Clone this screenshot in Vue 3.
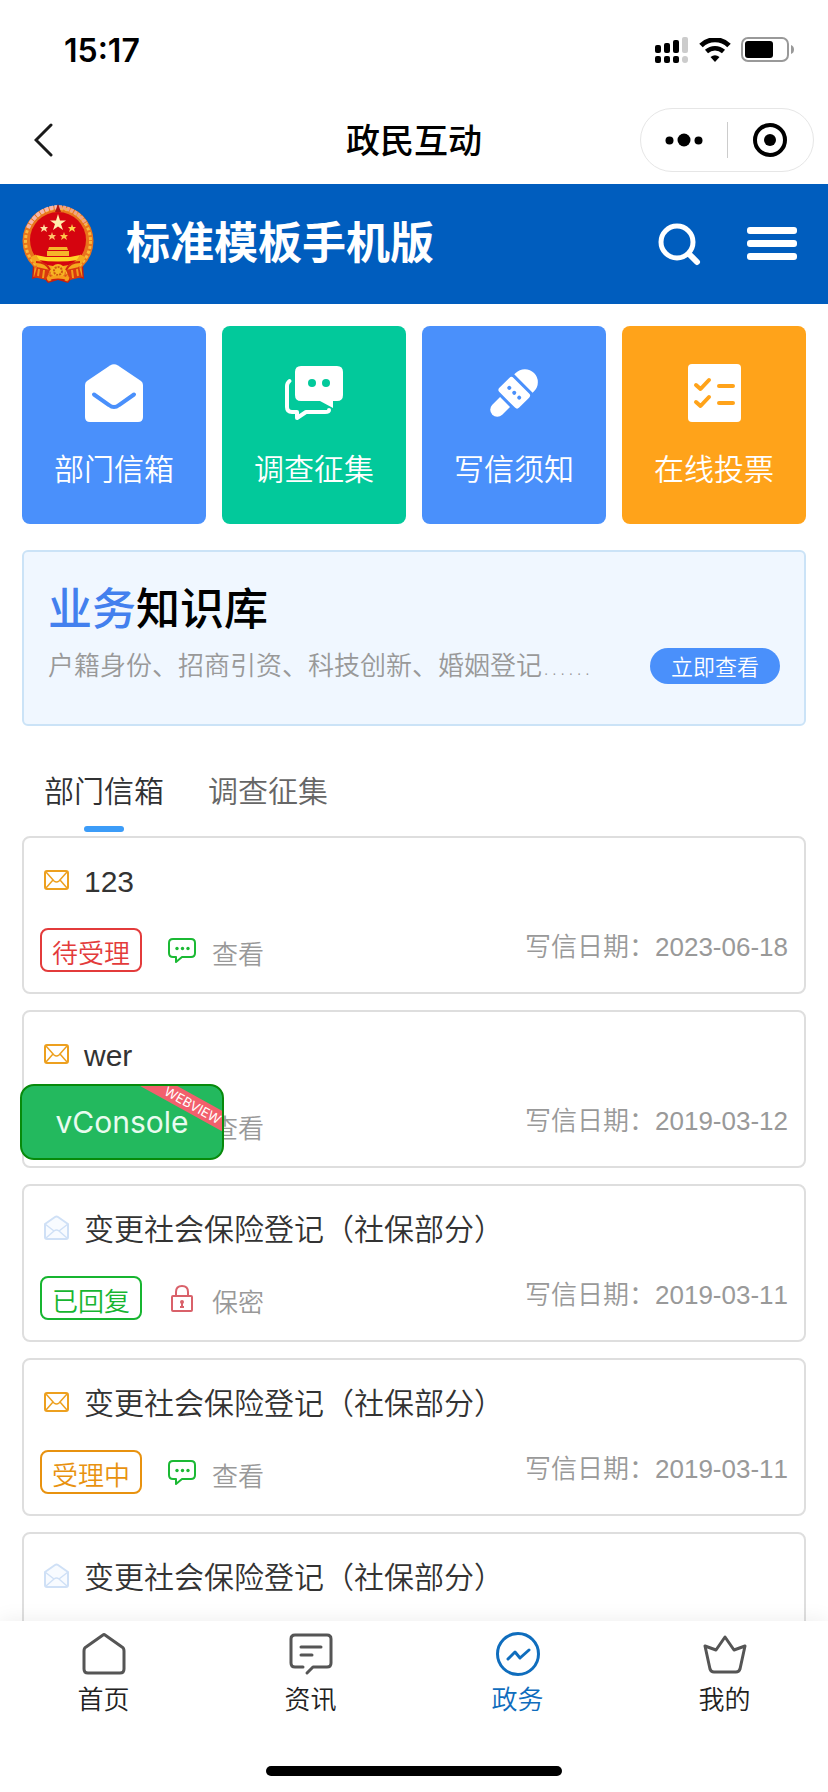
<script setup>
import { ref } from "vue";

const activeTab = ref(0);
const activeNav = ref("gov");

const entries = [
  { name: "部门信箱", icon: "mail", color: "blue" },
  { name: "调查征集", icon: "chat", color: "green" },
  { name: "写信须知", icon: "mic", color: "blue" },
  { name: "在线投票", icon: "vote", color: "orange" },
];

const tabs = ["部门信箱", "调查征集"];

const letters = [
  { id: 1, title: "123", status: "待受理", type: "wait", open: false, secret: false, date: "2023-06-18" },
  { id: 2, title: "wer", status: "待受理", type: "wait", open: false, secret: false, date: "2019-03-12" },
  { id: 3, title: "变更社会保险登记（社保部分）", status: "已回复", type: "done", open: true, secret: true, date: "2019-03-11" },
  { id: 4, title: "变更社会保险登记（社保部分）", status: "受理中", type: "doing", open: false, secret: false, date: "2019-03-11" },
  { id: 5, title: "变更社会保险登记（社保部分）", status: "已回复", type: "done", open: true, secret: true, date: "2019-03-11" },
];

const navs = [
  { key: "home", name: "首页" },
  { key: "news", name: "资讯" },
  { key: "gov", name: "政务" },
  { key: "mine", name: "我的" },
];
</script>

<template>
  <div class="page">
    <div class="status-bar">
      <span class="time">15:17</span>
      <div class="status-icons">
        <svg width="34" height="27" viewBox="0 0 34 27">
          <rect x="0" y="8" width="6" height="8" rx="2" />
          <rect x="9" y="6" width="6" height="10" rx="2" />
          <rect x="18" y="3" width="6" height="13" rx="2" />
          <rect x="27" y="0" width="6" height="16" rx="2" fill="#ccc" />
          <rect x="0" y="19" width="6" height="7" rx="2" />
          <rect x="9" y="19" width="6" height="7" rx="2" />
          <rect x="18" y="19" width="6" height="7" rx="2" />
          <rect x="27" y="19" width="6" height="7" rx="3" fill="#ccc" />
        </svg>
        <svg width="32" height="24" viewBox="0 0 32 24">
          <path d="M2 7.5 A20 20 0 0 1 30 7.5" fill="none" stroke="#000" stroke-width="5" />
          <path d="M7.5 13.5 A12.5 12.5 0 0 1 24.5 13.5" fill="none" stroke="#000" stroke-width="4.5" />
          <path d="M11.5 19 Q16 15.5 20.5 19 L16 24 Z" />
        </svg>
        <svg width="54" height="26" viewBox="0 0 54 26">
          <rect x="1" y="1" width="46" height="23" rx="6" fill="none" stroke="#999" stroke-width="2" />
          <rect x="4" y="4" width="28" height="17" rx="3" />
          <path d="M50 8 Q53 9 53 12.500 Q53 16 50 17 Z" fill="#999" />
        </svg>
      </div>
    </div>

    <div class="nav-bar">
      <button class="back" aria-label="返回">
        <svg width="20" height="34" viewBox="0 0 20 34">
          <path d="M17 2 L2 17 L17 32" fill="none" stroke="#1a1a1a" stroke-width="3" stroke-linecap="round" />
        </svg>
      </button>
      <h1 class="nav-title">政民互动</h1>
      <div class="capsule">
        <button aria-label="更多">
          <svg width="38" height="14" viewBox="0 0 38 14">
            <circle cx="4.500" cy="7.500" r="4" />
            <circle cx="19" cy="7" r="6.500" />
            <circle cx="33.500" cy="7.500" r="4" />
          </svg>
        </button>
        <span class="capsule-line"></span>
        <button aria-label="关闭">
          <svg width="34" height="34" viewBox="0 0 34 34">
            <circle cx="17" cy="17" r="15" fill="none" stroke="#000" stroke-width="4" />
            <circle cx="17" cy="17" r="6" />
          </svg>
        </button>
      </div>
    </div>

    <header class="site-header">
      <svg class="emblem" width="72" height="80" viewBox="0 0 72 80">
        <path d="M11 60 L10 75 L20 72 L26 79 L36 76 L46 79 L52 72 L62 75 L61 60 Z" fill="#c9200f" />
        <path d="M14 63 L13 73 M19 65 L20 72 M25 69 L28 77 M47 69 L44 77 M53 65 L52 72 M58 63 L59 73" stroke="#f39a1c" stroke-width="3" />
        <circle cx="36" cy="37" r="35.500" fill="#e9741c" />
        <circle cx="36" cy="37" r="32.500" fill="none" stroke="#f9b93a" stroke-width="3" stroke-dasharray="3 2" />
        <path d="M6 24 A34 34 0 0 1 35 3" fill="none" stroke="#f3b6ae" stroke-width="4" stroke-dasharray="4 1" />
        <path d="M37 3 A34 34 0 0 1 64 20" fill="none" stroke="#f2a184" stroke-width="4" stroke-dasharray="3 1" />
        <path d="M36 0 L39 8 L33 8 Z" fill="#b31212" />
        <circle cx="36" cy="36" r="28" fill="#d5040f" />
        <polygon points="36,10 38,16.500 44,16.500 39,20 41,26 36,22.500 31,26 33,20 28,16.500 34,16.500" fill="#fff0ae" />
        <polygon points="22,20 23,23 26,23 24,25 25,28 22,26 19,28 20,25 18,23 21,23" fill="#ffe0a0" />
        <polygon points="50,20 51,23 54,23 52,25 53,28 50,26 47,28 48,25 46,23 49,23" fill="#ffd24a" />
        <polygon points="30,28 31,31 34,31 32,33 33,36 30,34 27,36 28,33 26,31 29,31" fill="#ffc26a" />
        <polygon points="42,28 43,31 46,31 44,33 45,36 42,34 39,36 40,33 38,31 41,31" fill="#ffc24a" />
        <path d="M27 43 L45 43 L46 46 L26 46 Z M25 47 H47 V52 H25 Z" fill="#f6b52a" />
        <path d="M14 51 L24 53 H48 L58 51 L56 56 Q36 59 16 56 Z" fill="#ffd426" />
        <path d="M11 52 Q18 65 31 65 M61 52 Q54 65 41 65" fill="none" stroke="#f5a81e" stroke-width="6" />
        <path d="M14 58 Q24 58 28 66 M58 58 Q48 58 44 66" fill="none" stroke="#d3260e" stroke-width="2" />
        <path d="M15 63 L28 66 L24 76 L12 73 Z M57 63 L44 66 L48 76 L60 73 Z" fill="#d8380f" />
        <path d="M17 65 L16 72 M22 66 L21 74 M55 65 L56 72 M50 66 L51 74" stroke="#f39a1c" stroke-width="2" />
        <circle cx="36" cy="67" r="7" fill="#f7b522" />
        <circle cx="36" cy="67" r="4" fill="none" stroke="#cf5a10" stroke-width="2" stroke-dasharray="2 1" />
        <path d="M25 75 Q36 71 47 75" fill="none" stroke="#f6a01c" stroke-width="3" />
      </svg>
      <span class="site-name">标准模板手机版</span>
      <button class="search" aria-label="搜索">
        <svg width="44" height="44" viewBox="0 0 44 44" fill="none" stroke="#fff" stroke-linecap="round">
          <circle cx="20" cy="20" r="16" stroke-width="5" />
          <path d="M32 32 L40 40" stroke-width="6" />
        </svg>
      </button>
      <button aria-label="菜单">
        <svg width="50" height="34" viewBox="0 0 50 34" fill="#fff">
          <rect y="0" width="50" height="7" rx="3" />
          <rect y="13" width="50" height="7" rx="3" />
          <rect y="26" width="50" height="7" rx="3" />
        </svg>
      </button>
    </header>

    <main class="content">
      <nav class="entries">
        <a v-for="e in entries" :key="e.name" href="#" class="entry" :class="e.color">
          <svg v-if="e.icon === 'mail'" width="58" height="58" viewBox="0 0 58 58">
            <path d="M25 1.500 Q29 -1 33 1.500 L56 17 Q58 18.500 58 21 V53 Q58 58 53 58 H5 Q0 58 0 53 V21 Q0 18.500 2 17 Z" fill="#fff" />
            <path d="M9 30.500 L24 41 Q29 45 34 41 L49 30.500" fill="none" stroke="#4a90fb" stroke-width="4" stroke-linecap="round" />
          </svg>
          <svg v-else-if="e.icon === 'chat'" width="58" height="58" viewBox="0 0 58 58">
            <path d="M16 2 H52 Q58 2 58 8 V31 Q58 37 52 37 H48 V44 L35 37 H16 Q10 37 10 31 V8 Q10 2 16 2 Z" fill="#fff" />
            <circle cx="27" cy="19" r="4" fill="#02c99b" />
            <circle cx="41" cy="19" r="4" fill="#02c99b" />
            <path d="M4.500 17 Q2 19 2 22 V43 Q2 48 7 48 H12 V54 L21 48 H40 Q44 48 44 46" fill="none" stroke="#fff" stroke-width="4" stroke-linecap="round" stroke-linejoin="round" />
          </svg>
          <svg v-else-if="e.icon === 'mic'" width="58" height="58" viewBox="0 0 58 58">
            <g transform="translate(-4 4) rotate(45 29 29)" fill="#fff">
              <path d="M16 10 V8 A13 13 0 0 1 42 8 V10 Z" />
              <rect x="15" y="13" width="28" height="20" rx="3" />
              <path d="M22 36 H36 V47 A7 7 0 0 1 22 47 Z" />
              <circle cx="22" cy="23" r="2" fill="#4a90fb" />
              <circle cx="29" cy="23" r="2" fill="#4a90fb" />
              <circle cx="36" cy="23" r="2" fill="#4a90fb" />
            </g>
          </svg>
          <svg v-else width="58" height="58" viewBox="0 0 58 58">
            <rect x="3" width="53" height="58" rx="4" fill="#fff" />
            <path d="M11 21 L15.500 25 L24 16 M11 38 L15.500 42 L24 33" fill="none" stroke="#ffa31a" stroke-width="4" stroke-linecap="round" stroke-linejoin="round" />
            <path d="M34 22 H48 M34 39 H48" stroke="#ffa31a" stroke-width="4" stroke-linecap="round" />
          </svg>
          <span>{{ e.name }}</span>
        </a>
      </nav>

      <section class="knowledge">
        <h2><em>业务</em>知识库</h2>
        <div class="knowledge-row">
          <p>户籍身份、招商引资、科技创新、婚姻登记......</p>
          <button>立即查看</button>
        </div>
      </section>

      <div class="tabs" role="tablist">
        <button
          v-for="(t, i) in tabs"
          :key="t"
          role="tab"
          class="tab"
          :class="{ active: activeTab === i }"
          :aria-selected="activeTab === i"
          @click="activeTab = i"
        >
          {{ t }}
        </button>
      </div>

      <ul class="letters">
        <li v-for="l in letters" :key="l.id" class="letter">
          <div class="letter-head">
            <svg v-if="!l.open" width="34" height="30" viewBox="0 0 34 30" fill="none" stroke="#eda01f" stroke-width="2" stroke-linejoin="round">
              <rect x="5" y="4" width="23" height="18" rx="2" />
              <path d="M6 5 L14 14 Q16.500 16 19 14 L27 5 M6 21 L13 13 M27 21 L20 13" stroke-width="1.500" />
            </svg>
            <svg v-else width="34" height="30" viewBox="0 0 34 30" fill="#f8fbff" stroke="#cfe0f6" stroke-width="2" stroke-linejoin="round">
              <path d="M5 9 L15 2 Q16.500 1 18 2 L28 9 V22 Q28 24 26 24 H7 Q5 24 5 22 Z" />
              <path d="M5 9 L14 16 M28 9 L19 16 M6 23 L14 16 Q16.500 14 19 16 L27 23" stroke-width="1.500" />
            </svg>
            <span>{{ l.title }}</span>
          </div>
          <div class="letter-foot">
            <span class="badge" :class="l.type">{{ l.status }}</span>
            <svg v-if="!l.secret" width="32" height="44" viewBox="0 0 32 44">
              <path d="M7 11 H25 Q29 11 29 15 V25 Q29 29 25 29 H16 L10 34 V29 H7 Q3 29 3 25 V15 Q3 11 7 11 Z" fill="none" stroke="#1bb934" stroke-width="2" stroke-linejoin="round" />
              <g fill="#1bb934">
                <circle cx="11" cy="20.500" r="1.700" />
                <circle cx="16.500" cy="20.500" r="1.700" />
                <circle cx="22" cy="20.500" r="1.700" />
              </g>
            </svg>
            <svg v-else width="32" height="44" viewBox="0 0 32 44" fill="none" stroke="#d9616a" stroke-width="2">
              <rect x="6" y="20" width="20" height="15" rx="1" />
              <path d="M10 20 V16 Q10 10 16 10 Q22 10 22 16 V20" />
              <circle cx="16" cy="26" r="1" />
              <path d="M16 26 V31 M14 31 H18" />
            </svg>
            <a href="#" class="view">{{ l.secret ? "保密" : "查看" }}</a>
            <span class="date">写信日期：{{ l.date }}</span>
          </div>
        </li>
      </ul>
    </main>

    <nav class="tab-bar">
      <div class="tab-items">
        <a v-for="n in navs" :key="n.key" href="#" :class="{ on: activeNav === n.key }" @click.prevent="activeNav = n.key">
          <svg width="44" height="44" viewBox="0 0 44 44" fill="none" stroke-width="3" stroke-linecap="round" stroke-linejoin="round">
            <path v-if="n.key === 'home'" d="M21 3 Q22 2 23 3 L40 15 Q42 16 42 19 V37 Q42 41 38 41 H6 Q2 41 2 37 V19 Q2 16 4 15 Z" />
            <g v-else-if="n.key === 'news'">
              <path d="M14 35 H6 Q2 35 2 31 V7 Q2 3 6 3 H38 Q42 3 42 7 V31 Q42 35 38 35 H24 L18 41" />
              <path d="M12 15 H32 M12 23 H23" />
            </g>
            <g v-else-if="n.key === 'gov'">
              <circle cx="22" cy="22" r="20.500" />
              <path d="M12 27 L19 20 L24 26 L33 18" />
            </g>
            <path v-else d="M2 14 L13 18 L22 5 L31 18 L42 14 L37 37 Q36 40 33 40 H11 Q8 40 7 37 Z" />
          </svg>
          <span>{{ n.name }}</span>
        </a>
      </div>
      <div class="home-indicator"></div>
    </nav>

    <button class="vconsole">
      vConsole
      <span class="ribbon">WEBVIEW</span>
    </button>
  </div>
</template>

<style>
body {
  background: #fff;
}
</style>

<style scoped>
.page {
  height: 100vh;
  display: flex;
  flex-direction: column;
  overflow: hidden;
  position: relative;
  font-family: "Liberation Sans", "Noto Sans CJK SC", sans-serif;
  font-weight: 350;
  font-kerning: none;
  color: #333;
}

button {
  border: none;
  background: none;
  padding: 0;
  font: inherit;
  color: inherit;
  cursor: pointer;
}

a {
  color: inherit;
  text-decoration: none;
}

svg {
  display: block;
  flex-shrink: 0;
}

h1,
h2,
p,
ul {
  margin: 0;
  padding: 0;
}

.status-bar {
  height: 96px;
  box-sizing: border-box;
  padding: 4px 33px 0 64px;
  display: flex;
  align-items: center;
  justify-content: space-between;
}

.time {
  font-family: Inter, sans-serif;
  font-size: 32px;
  font-weight: 600;
  color: #000;
}

.status-icons {
  display: flex;
  align-items: center;
  gap: 10px;
}

.nav-bar {
  height: 88px;
  display: grid;
  grid-template-columns: 1fr auto 1fr;
  align-items: center;
  padding: 0 14px 0 34px;
}

.back {
  justify-self: start;
}

.nav-title {
  font-size: 34px;
  font-weight: 500;
  color: #000;
  padding: 0 20px 4px 0;
}

.capsule {
  justify-self: end;
  width: 174px;
  height: 64px;
  box-sizing: border-box;
  border: 1px solid #e6e6e6;
  border-radius: 32px;
  display: flex;
  align-items: center;
}

.capsule button {
  flex: 1;
  display: flex;
  justify-content: center;
}

.capsule-line {
  width: 1px;
  height: 36px;
  background: #ccc;
}

.site-header {
  height: 120px;
  flex-shrink: 0;
  background: #005dbe;
  padding: 0 31px 0 22px;
  display: flex;
  align-items: center;
}

.site-name {
  flex: 1;
  margin-left: 32px;
  padding-bottom: 8px;
  font-size: 44px;
  font-weight: 700;
  color: #fff;
}

.search {
  margin-right: 46px;
}

.content {
  flex: 1;
  min-height: 0;
  overflow: hidden;
  padding: 22px 22px 0;
}

.entries {
  display: grid;
  grid-template-columns: repeat(4, 1fr);
  gap: 16px;
}

.entry {
  height: 198px;
  box-sizing: border-box;
  padding-top: 38px;
  border-radius: 8px;
  display: flex;
  flex-direction: column;
  align-items: center;
  gap: 28px;
  font-size: 30px;
  line-height: 40px;
  color: #fff;
}

.entry.blue {
  background: #4a90fb;
}

.entry.green {
  background: #02c99b;
}

.entry.orange {
  background: #ffa31a;
}

.knowledge {
  margin-top: 26px;
  height: 176px;
  box-sizing: border-box;
  padding: 28px 24px 0;
  border: 2px solid #cbe3f7;
  border-radius: 6px;
  background: #f0f7ff;
}

.knowledge h2 {
  font-size: 44px;
  line-height: 60px;
  font-weight: 500;
  color: #000;
}

.knowledge em {
  font-style: normal;
  color: #4380ee;
}

.knowledge-row {
  margin-top: 8px;
  display: flex;
  align-items: center;
  justify-content: space-between;
}

.knowledge-row p {
  font-family: "DejaVu Sans", "Noto Sans CJK SC", sans-serif;
  font-size: 26px;
  line-height: 36px;
  color: #999;
}

.knowledge-row button {
  width: 130px;
  height: 36px;
  padding-bottom: 2px;
  border-radius: 18px;
  background: #4a90fb;
  color: #fff;
  font-size: 22px;
}

.tabs {
  display: flex;
  gap: 44px;
  padding: 46px 22px 4px;
}

.tab {
  display: flex;
  flex-direction: column;
  align-items: center;
  gap: 14px;
  font-size: 30px;
  line-height: 40px;
  color: #666;
}

.tab::after {
  content: "";
  width: 40px;
  height: 6px;
  border-radius: 3px;
}

.tab.active {
  color: #303133;
}

.tab.active::after {
  background: #3c9cf8;
}

.letters {
  list-style: none;
  display: flex;
  flex-direction: column;
  gap: 16px;
}

.letter {
  border: 2px solid #dedede;
  border-radius: 8px;
  padding: 24px 16px 20px;
}

.letter-head {
  display: flex;
  align-items: center;
  gap: 10px;
  font-size: 30px;
  line-height: 40px;
}

.letter-foot {
  margin-top: 26px;
  height: 44px;
  display: flex;
  align-items: center;
  font-size: 26px;
  color: #999;
}

.badge {
  box-sizing: border-box;
  width: 102px;
  height: 44px;
  margin-right: 24px;
  padding-top: 4px;
  border: 2px solid;
  border-radius: 8px;
  line-height: 40px;
  text-align: center;
}

.badge.wait {
  color: #e33b3b;
}

.badge.done {
  color: #17b530;
}

.badge.doing {
  color: #e8920f;
}

.view {
  align-self: flex-end;
  margin-left: 14px;
  line-height: 34px;
}

.date {
  align-self: flex-start;
  margin-left: auto;
  line-height: 38px;
}

.tab-bar {
  position: relative;
  height: 171px;
  box-sizing: border-box;
  flex-shrink: 0;
  display: flex;
  flex-direction: column;
  align-items: center;
  justify-content: space-between;
  padding: 11px 0 16px;
  background: #fff;
  box-shadow: 0 0 20px rgba(0, 0, 0, 0.08);
}

.tab-items {
  width: 100%;
  display: flex;
}

.tab-items a {
  flex: 1;
  display: flex;
  flex-direction: column;
  align-items: center;
  gap: 6px;
  font-size: 26px;
  line-height: 36px;
  color: #222;
}

.tab-items svg {
  stroke: #555;
}

.tab-items .on {
  color: #0f6dbd;
}

.tab-items .on svg {
  stroke: #0f6dbd;
}

.home-indicator {
  width: 296px;
  height: 10px;
  border-radius: 5px;
  background: #000;
}

.vconsole {
  position: absolute;
  left: 20px;
  top: 1084px;
  width: 204px;
  height: 76px;
  overflow: hidden;
  border: 2px solid #078a0b;
  border-radius: 14px;
  background: #23b95e;
  color: #e9fbef;
  font-family: Inter, sans-serif;
  font-size: 30px;
  font-weight: 400;
}

.ribbon {
  position: absolute;
  left: 101px;
  top: 10px;
  width: 140px;
  height: 18px;
  background: #f2606c;
  color: #fff;
  font-size: 13px;
  line-height: 18px;
  text-align: center;
  transform: rotate(29deg);
}
</style>
